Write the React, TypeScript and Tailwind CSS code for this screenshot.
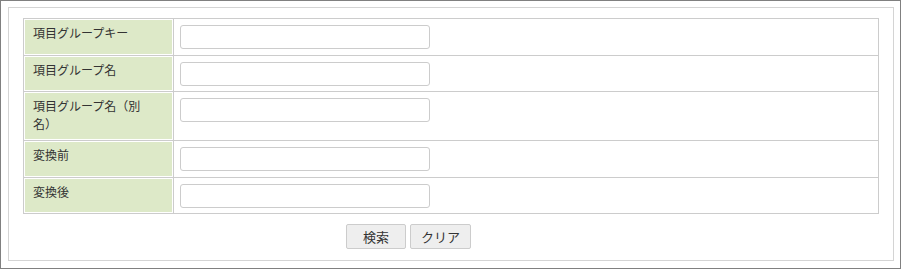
import React from "react";

const rows = [
  { label: "項目グループキー", h: "h-[36px]" },
  { label: "項目グループ名", h: "h-[35px]" },
  { label: "項目グループ名（別名）", h: "h-[48px]" },
  { label: "変換前", h: "h-[36px]" },
  { label: "変換後", h: "h-[35px]" },
];

export default function App() {
  return (
    <div
      className="w-[901px] h-[269px] border border-[#808080] bg-white pl-[7px] pt-[6px] pr-[6px] pb-[7px] text-[#333333]"
      style={{ fontFamily: '"Noto Sans CJK JP", "Noto Sans", sans-serif' }}
    >
      <div className="h-full border border-[#d4d4d4] px-[14px] pt-[10px]">
        {/* search conditions */}
        <div className="grid grid-cols-[149px_1fr] gap-px bg-[#cccccc] border border-[#cccccc]">
          {rows.map((row) => (
            <React.Fragment key={row.label}>
              <div
                className={`${row.h} bg-[#dde9c8] border border-white pl-[8px] pr-[30px] pt-[4px] text-[12px] leading-[18px]`}
              >
                {row.label}
              </div>
              <div className={`${row.h} bg-white pl-[6px] pt-[6px]`}>
                <input
                  type="text"
                  className="block w-[250px] h-[24px] border border-[#cccccc] rounded-[3px] bg-white px-1 text-[12px] outline-none"
                />
              </div>
            </React.Fragment>
          ))}
        </div>

        {/* Actions */}
        <div className="flex gap-[4px] mt-[10px] pl-[323px]">
          <button className="w-[60px] h-[25px] border border-[#cccccc] rounded-[2px] bg-[#eeeeee] text-[13px] text-[#333333] leading-none">
            検索
          </button>
          <button className="w-[61px] h-[25px] border border-[#cccccc] rounded-[2px] bg-[#eeeeee] text-[13px] text-[#333333] leading-none">
            クリア
          </button>
        </div>
      </div>
    </div>
  );
}
